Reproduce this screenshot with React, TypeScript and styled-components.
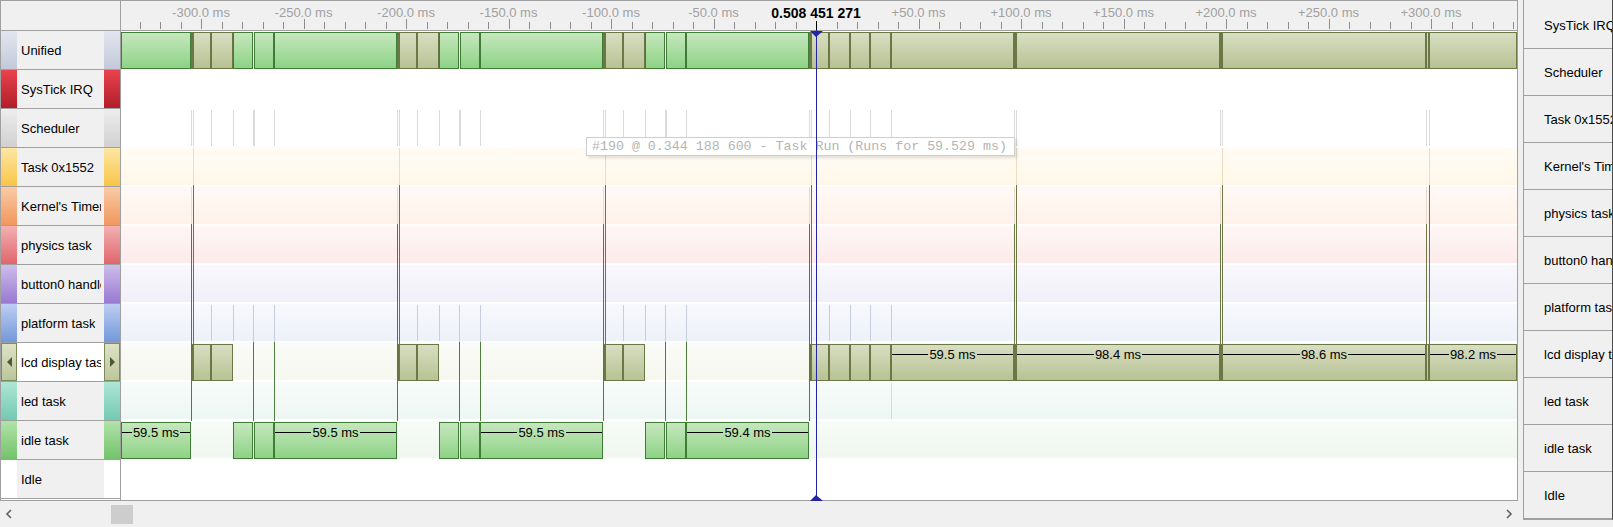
import { FC } from 'react';
import styled, { createGlobalStyle } from 'styled-components';

// page geometry of the trace view
const TL_LEFT = 121;
const TRACKS_TOP = 31;
const CURSOR = 816;
const PX_PER_MS = 2.05;

type Kind = 'green' | 'olive';

interface Seg {
  from: number;
  to: number;
  kind: Kind;
  label?: string;
}

interface Track {
  name: string;
  strip?: [string, string];
  band?: string;
  selected?: boolean;
  segs?: Seg[];
}

const CYCLES = [191, 397, 603];
const IDLE_LABELS = ['59.5 ms', '59.5 ms', '59.4 ms'];
const AFTER = [809, 811, 829, 850, 870, 891, 1014, 1016, 1220, 1222, 1426, 1429, 1517];
const AFTER_LABELS: Record<number, string> = {
  891: '59.5 ms',
  1016: '98.4 ms',
  1222: '98.6 ms',
  1429: '98.2 ms',
};

const oliveRun = (c: number): Seg[] => [
  { from: c, to: c + 2, kind: 'olive' },
  { from: c + 2, to: c + 20, kind: 'olive' },
  { from: c + 20, to: c + 42, kind: 'olive' },
];

const greenRun = (c: number, label?: string): Seg[] => [
  { from: c + 42, to: c + 62, kind: 'green' },
  { from: c + 63, to: c + 83, kind: 'green' },
  { from: c + 83, to: c + 206, kind: 'green', label },
];

const afterCursor = (labelled: boolean): Seg[] =>
  AFTER.slice(0, -1).map((from, i) => ({
    from,
    to: AFTER[i + 1],
    kind: 'olive',
    label: labelled ? AFTER_LABELS[from] : undefined,
  }));

const TRACKS: Track[] = [
  {
    name: 'Unified',
    strip: ['#e3e6ef', '#c2c9da'],
    segs: [
      { from: 121, to: 191, kind: 'green' },
      ...CYCLES.flatMap(c => [...oliveRun(c), ...greenRun(c)]),
      ...afterCursor(false),
    ],
  },
  { name: 'SysTick IRQ', strip: ['#e8434d', '#b21d29'] },
  { name: 'Scheduler', strip: ['#ededed', '#d0d0d0'] },
  { name: 'Task 0x1552', strip: ['#fde7a4', '#f8c546'], band: '#fff8e9' },
  { name: "Kernel's Timer", strip: ['#facba7', '#f0975c'], band: '#fff2ea' },
  { name: 'physics task', strip: ['#f3b1b3', '#e0656b'], band: '#fdebeb' },
  { name: 'button0 handler', strip: ['#cdbdea', '#9979d2'], band: '#f1eff9' },
  { name: 'platform task', strip: ['#bdcef2', '#7398da'], band: '#edf1f9' },
  {
    name: 'lcd display task',
    band: '#f6f7ee',
    selected: true,
    segs: [...CYCLES.flatMap(oliveRun), ...afterCursor(true)],
  },
  { name: 'led task', strip: ['#aee6d6', '#73c9b1'], band: '#eef7f4' },
  {
    name: 'idle task',
    strip: ['#b1e3a9', '#73c36b'],
    band: '#eff7ee',
    segs: [
      { from: 121, to: 191, kind: 'green', label: '59.5 ms' },
      ...CYCLES.flatMap((c, i) => greenRun(c, IDLE_LABELS[i])),
    ],
  },
  { name: 'Idle' },
];

const RIGHT_NAMES = [
  'SysTick IRQ',
  'Scheduler',
  'Task 0x1552',
  "Kernel's Timer",
  'physics task',
  'button0 handler',
  'platform task',
  'lcd display task',
  'led task',
  'idle task',
  'Idle',
];

interface VLine {
  x: number;
  y1: number;
  y2: number;
  color: string;
}

const buildLines = (): VLine[] => {
  const lines: VLine[] = [];
  const grey = (x: number, y1: number, y2: number) =>
    lines.push({ x, y1, y2, color: '#dadada' });
  const blueGrey = (x: number) => lines.push({ x, y1: 305, y2: 341, color: '#c6cedb' });

  [...CYCLES, 809].forEach(c => {
    lines.push({ x: c, y1: 187, y2: 224, color: '#eadbcd' });
    lines.push({ x: c, y1: 224, y2: 421, color: '#4d7d3f' });
    lines.push({ x: c + 2, y1: 148, y2: 185, color: '#e9ddc4' });
    lines.push({ x: c + 2, y1: 185, y2: 344, color: '#6b7846' });
    grey(c, 110, 146);
    grey(c + 2, 110, 146);
  });

  CYCLES.forEach(c => {
    [c + 20, c + 42, c + 62, c + 63, c + 83].forEach(x => grey(x, 110, 146));
    [c + 20, c + 42].forEach(blueGrey);
    [c + 62, c + 83].forEach(x => {
      lines.push({ x, y1: 305, y2: 342, color: '#c6cedb' });
      lines.push({ x, y1: 342, y2: 421, color: '#4d7d3f' });
    });
  });

  [829, 850, 870, 891].forEach(x => {
    grey(x, 110, 146);
    blueGrey(x);
  });
  grey(891, 383, 419);

  [1014, 1220, 1426].forEach(c => {
    const c2 = c === 1426 ? c + 3 : c + 2;
    grey(c, 110, 146);
    grey(c2, 110, 146);
    lines.push({ x: c, y1: 187, y2: 224, color: '#eadbcd' });
    lines.push({ x: c, y1: 224, y2: 344, color: '#6b7846' });
    lines.push({ x: c2, y1: 148, y2: 185, color: '#e9ddc4' });
    lines.push({ x: c2, y1: 185, y2: 344, color: '#6b7846' });
  });

  return lines;
};

const LINES = buildLines();

const RULER_LABELS = [-300, -250, -200, -150, -100, -50, 50, 100, 150, 200, 250, 300];

const tickX = (ms: number) => CURSOR + ms * PX_PER_MS - TL_LEFT;

const GlobalStyle = createGlobalStyle`
  html, body {
    margin: 0;
    padding: 0;
    background: #f0f0f0;
  }
  body {
    font-family: "Liberation Sans", Arial, sans-serif;
    overflow: hidden;
  }
`;

const TimeRuler: FC = () => {
  const ticks: number[] = [];
  for (let k = -33; k <= 34; k++) ticks.push(k * 10);

  return (
    <RulerBar>
      <RulerTicks width="1396" height="29">
        {ticks.map(ms => {
          const x = Math.round(tickX(ms)) + 0.5;
          if (ms === 0) {
            return <line key={ms} x1={x} x2={x} y1={20} y2={29} stroke="#000" />;
          }
          const major = ms % 50 === 0;
          return (
            <line
              key={ms}
              x1={x}
              x2={x}
              y1={major ? 18 : 21}
              y2={28}
              stroke="#8c8c8c"
            />
          );
        })}
      </RulerTicks>
      {RULER_LABELS.map(ms => (
        <TickLabel key={ms} style={{ left: tickX(ms) }}>
          {`${ms > 0 ? '+' : ''}${ms.toFixed(1)} ms`}
        </TickLabel>
      ))}
      <TickLabel $now style={{ left: tickX(0) }}>
        0.508 451 271
      </TickLabel>
    </RulerBar>
  );
};

const SegmentBar: FC<{ seg: Seg }> = ({ seg }) => (
  <Bar
    $kind={seg.kind}
    style={{ left: seg.from - TL_LEFT, width: seg.to - seg.from }}
  >
    {seg.label && (
      <BarLabel>
        <Rule />
        <BarText>{seg.label}</BarText>
        <Rule />
      </BarLabel>
    )}
  </Bar>
);

const LabelRow: FC<{ track: Track }> = ({ track }) => (
  <LabelCell>
    {track.selected ? (
      <ArrowButton>
        <Arrow $dir="left" />
      </ArrowButton>
    ) : (
      <Strip $colors={track.strip} />
    )}
    <LabelText $selected={track.selected}>
      <LabelName>{track.name}</LabelName>
    </LabelText>
    {track.selected ? (
      <ArrowButton>
        <Arrow $dir="right" />
      </ArrowButton>
    ) : (
      <Strip $colors={track.strip} />
    )}
  </LabelCell>
);

const App: FC = () => {
  return (
    <>
      <GlobalStyle />
      <Window>
        <MainPane>
          <ChartBody>
            <LabelColumn>
              <RulerCorner />
              {TRACKS.map(track => (
                <LabelRow key={track.name} track={track} />
              ))}
            </LabelColumn>
            <Timeline>
              <TimeRuler />
              <Tracks>
                {TRACKS.map(track => (
                  <TrackRow key={track.name} $band={track.band}>
                    {track.segs?.map((seg, i) => (
                      <SegmentBar key={i} seg={seg} />
                    ))}
                  </TrackRow>
                ))}
                <Connectors width="1396" height="468">
                  {LINES.map((l, i) => (
                    <line
                      key={i}
                      x1={Math.round(l.x - TL_LEFT) + 0.5}
                      x2={Math.round(l.x - TL_LEFT) + 0.5}
                      y1={l.y1 - TRACKS_TOP}
                      y2={l.y2 - TRACKS_TOP}
                      stroke={l.color}
                    />
                  ))}
                </Connectors>
                <Tooltip>#190 @ 0.344 188 600 - Task Run (Runs for 59.529 ms)</Tooltip>
              </Tracks>
              <Cursor style={{ left: CURSOR - TL_LEFT }}>
                <CursorHead $at="top" />
                <CursorHead $at="bottom" />
              </Cursor>
            </Timeline>
          </ChartBody>
          <HScroll>
            <ScrollArrow width="17" height="24" viewBox="0 0 17 24">
              <polyline points="11,8 7,12 11,16" fill="none" stroke="#606060" strokeWidth="1.6" />
            </ScrollArrow>
            <ScrollTrack>
              <Thumb />
            </ScrollTrack>
            <ScrollArrow width="17" height="24" viewBox="0 0 17 24">
              <polyline points="6,8 10,12 6,16" fill="none" stroke="#606060" strokeWidth="1.6" />
            </ScrollArrow>
          </HScroll>
        </MainPane>
        <RightPanel>
          {RIGHT_NAMES.map(name => (
            <RightRow key={name}>{name}</RightRow>
          ))}
        </RightPanel>
      </Window>
    </>
  );
};

const Window = styled.div`
  display: flex;
  align-items: flex-start;
  width: 1613px;
  height: 527px;
  background: #f0f0f0;
  overflow: hidden;
`;

const MainPane = styled.div`
  display: flex;
  flex-direction: column;
  width: 1518px;
  height: 527px;
  border-top: 1px solid #a0a0a0;
  box-sizing: border-box;
`;

const ChartBody = styled.div`
  display: flex;
  height: 500px;
  border-bottom: 1px solid #a0a0a0;
  background: #fff;
`;

const LabelColumn = styled.div`
  display: flex;
  flex-direction: column;
  width: 121px;
  flex-shrink: 0;
  box-sizing: border-box;
  border-left: 1px solid #a0a0a0;
  border-right: 1px solid #a0a0a0;
  background: #fff;
`;

const RulerCorner = styled.div`
  height: 29px;
  border-bottom: 1px solid #a0a0a0;
  background: #f0f0f0;
`;

const LabelCell = styled.div`
  display: grid;
  grid-template-columns: 16px 1fr 16px;
  height: 39px;
  box-sizing: border-box;
  border-bottom: 1px solid #a0a0a0;
`;

const Strip = styled.div<{ $colors?: [string, string] }>`
  background: ${({ $colors }) =>
    $colors ? `linear-gradient(to bottom, ${$colors[0]}, ${$colors[1]})` : '#fff'};
`;

const ArrowButton = styled.div`
  display: flex;
  align-items: center;
  justify-content: center;
  box-sizing: border-box;
  border: 1px solid #7d8a5a;
  background: linear-gradient(to bottom, #dde2c6, #bdc69a);
`;

const Arrow = styled.span<{ $dir: 'left' | 'right' }>`
  width: 0;
  height: 0;
  border-top: 5px solid transparent;
  border-bottom: 5px solid transparent;
  ${({ $dir }) =>
    $dir === 'left' ? 'border-right: 5px solid #4d5a36;' : 'border-left: 5px solid #4d5a36;'}
`;

const LabelText = styled.div<{ $selected?: boolean }>`
  display: flex;
  align-items: center;
  min-width: 0;
  padding: 0 3px 0 4px;
  background: ${({ $selected }) => ($selected ? '#fff' : '#f0f0f0')};
`;

const LabelName = styled.span`
  overflow: hidden;
  white-space: nowrap;
  font-size: 13px;
  color: #000;
`;

const Timeline = styled.div`
  position: relative;
  display: flex;
  flex-direction: column;
  flex: 1;
  border-right: 1px solid #a0a0a0;
  background: #fff;
`;

const RulerBar = styled.div`
  position: relative;
  height: 29px;
  flex-shrink: 0;
  border-bottom: 1px solid #a0a0a0;
  background: #f0f0f0;
`;

const RulerTicks = styled.svg`
  position: absolute;
  left: 0;
  top: 0;
`;

const TickLabel = styled.span<{ $now?: boolean }>`
  position: absolute;
  top: 4px;
  transform: translateX(-50%);
  line-height: 16px;
  white-space: nowrap;
  font-size: ${({ $now }) => ($now ? '14px' : '13px')};
  font-weight: ${({ $now }) => ($now ? 700 : 400)};
  color: ${({ $now }) => ($now ? '#000' : '#a0a0a0')};
`;

const Tracks = styled.div`
  position: relative;
  display: flex;
  flex-direction: column;
`;

const TrackRow = styled.div<{ $band?: string }>`
  position: relative;
  height: 39px;
  background: ${({ $band }) =>
    $band
      ? `linear-gradient(rgba(255,255,255,0.55), rgba(255,255,255,0)) top / 100% 37px no-repeat,
         linear-gradient(${$band}, ${$band}) top / 100% 37px no-repeat`
      : 'transparent'};
`;

const Bar = styled.div<{ $kind: Kind }>`
  position: absolute;
  top: 1px;
  height: 37px;
  box-sizing: border-box;
  overflow: hidden;
  border: 1px solid ${({ $kind }) => ($kind === 'green' ? '#3f7c35' : '#6b7846')};
  background: ${({ $kind }) =>
    $kind === 'green'
      ? 'linear-gradient(to bottom, #c6e7be, #8dd385)'
      : 'linear-gradient(to bottom, #d8dec3, #b8c293)'};
`;

const BarLabel = styled.div`
  display: flex;
  align-items: center;
  height: 19px;
`;

const Rule = styled.span`
  flex: 1;
  height: 1px;
  background: #000;
`;

const BarText = styled.span`
  padding: 0 1px;
  font-size: 13px;
  color: #000;
  white-space: nowrap;
`;

const Connectors = styled.svg`
  position: absolute;
  left: 0;
  top: 0;
  pointer-events: none;
`;

const Tooltip = styled.div`
  position: absolute;
  left: 465px;
  top: 106px;
  width: 429px;
  height: 19px;
  box-sizing: border-box;
  padding-left: 5px;
  border: 1px solid #cfcfcf;
  background: rgba(255, 255, 255, 0.85);
  box-shadow: 2px 2px 3px rgba(0, 0, 0, 0.12);
  font-family: "Liberation Mono", "Courier New", monospace;
  font-size: 13.3px;
  line-height: 17px;
  color: #b4b4b4;
  white-space: nowrap;
`;

const Cursor = styled.div`
  position: absolute;
  top: 29px;
  bottom: -1px;
  width: 1px;
  background: #2424a6;
`;

const CursorHead = styled.span<{ $at: 'top' | 'bottom' }>`
  position: absolute;
  left: -6px;
  width: 0;
  height: 0;
  border-left: 6px solid transparent;
  border-right: 7px solid transparent;
  ${({ $at }) =>
    $at === 'top'
      ? 'top: 1px; border-top: 6px solid #2424a6;'
      : 'bottom: 0; border-bottom: 6px solid #2424a6;'}
`;

const HScroll = styled.div`
  display: flex;
  align-items: center;
  height: 26px;
  background: #f0f0f0;
`;

const ScrollArrow = styled.svg`
  flex-shrink: 0;
`;

const ScrollTrack = styled.div`
  display: flex;
  align-items: center;
  flex: 1;
  height: 100%;
`;

const Thumb = styled.div`
  width: 22px;
  height: 19px;
  margin-left: 94px;
  background: #cdcdcd;
`;

const RightPanel = styled.div`
  display: flex;
  flex-direction: column;
  width: 90px;
  height: 520px;
  margin-left: 5px;
  padding-top: 2px;
  box-sizing: border-box;
  border-left: 1px solid #a0a0a0;
  border-right: 1px solid #4a4a4a;
  border-bottom: 1px solid #a0a0a0;
  background: #f0f0f0;
`;

const RightRow = styled.div`
  display: flex;
  align-items: center;
  height: 47px;
  flex-shrink: 0;
  box-sizing: border-box;
  padding-left: 20px;
  border-bottom: 1px solid #a0a0a0;
  overflow: hidden;
  white-space: nowrap;
  font-size: 13px;
  color: #000;
`;

export default App;
